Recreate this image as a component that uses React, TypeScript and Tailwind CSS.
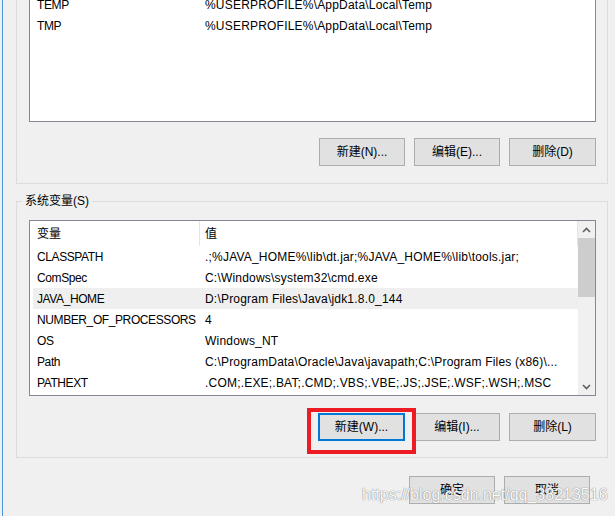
import React from 'react';

const userVars = [
  { name: 'TEMP', value: '%USERPROFILE%\\AppData\\Local\\Temp' },
  { name: 'TMP', value: '%USERPROFILE%\\AppData\\Local\\Temp' },
];

const systemVars = [
  { name: 'CLASSPATH', value: '.;%JAVA_HOME%\\lib\\dt.jar;%JAVA_HOME%\\lib\\tools.jar;' },
  { name: 'ComSpec', value: 'C:\\Windows\\system32\\cmd.exe' },
  { name: 'JAVA_HOME', value: 'D:\\Program Files\\Java\\jdk1.8.0_144', selected: true },
  { name: 'NUMBER_OF_PROCESSORS', value: '4' },
  { name: 'OS', value: 'Windows_NT' },
  { name: 'Path', value: 'C:\\ProgramData\\Oracle\\Java\\javapath;C:\\Program Files (x86)\\...' },
  { name: 'PATHEXT', value: '.COM;.EXE;.BAT;.CMD;.VBS;.VBE;.JS;.JSE;.WSF;.WSH;.MSC' },
];

// Classic Win10 push button
const WinButton: React.FC<{ label: string; focused?: boolean; className?: string }> = ({
  label,
  focused = false,
  className = '',
}) => (
  <div
    className={`flex h-[28px] w-[86px] items-center justify-center bg-[#e1e1e1] text-[12px] text-black ${
      focused ? 'border-2 border-[#0078d7]' : 'border border-[#adadad]'
    } ${className}`}
  >
    {label}
  </div>
);

const VarRow: React.FC<{ name: string; value: string; selected?: boolean }> = ({ name, value, selected }) => (
  <div className={`flex h-[21px] items-center whitespace-nowrap ${selected ? 'bg-[#efefef]' : ''}`}>
    <div className="w-[166px] shrink-0 pl-[4px] tracking-[-0.4px]">{name}</div>
    <div className="min-w-0 flex-1 overflow-hidden pl-[6px] tracking-[0.2px]">{value}</div>
  </div>
);

const Chevron: React.FC<{ down?: boolean }> = ({ down }) => (
  <svg width="9" height="6" viewBox="0 0 9 6" className={down ? 'rotate-180' : ''}>
    <path d="M1 5 L4.5 1.5 L8 5" fill="none" stroke="#606060" strokeWidth="1.6" />
  </svg>
);

export default function App() {
  return (
    <div className="relative flex h-[516px] w-[615px] overflow-hidden bg-[#f0f0f0] font-['Liberation_Sans','Noto_Sans_CJK_SC',sans-serif] text-[12px] text-black">
      {/* window edge */}
      <div className="w-[2px] shrink-0" />
      <div className="w-px shrink-0 bg-[#4a94d8]" />

      <div className="flex flex-1 flex-col pl-[13px] pr-[7px]">
        {/* User variables group (top cut off) */}
        <div className="flex h-[184px] flex-col border-x border-b border-[#dcdcdc]">
          <div className="ml-[12px] mr-[11px] h-[122px] overflow-hidden border-x border-b border-[#828790] bg-white">
            <div className="-mt-[6px] pl-[3px]">
              {userVars.map((v) => (
                <VarRow key={v.name} name={v.name} value={v.value} />
              ))}
            </div>
          </div>
          <div className="mr-[11px] mt-[16px] flex justify-end gap-[9px]">
            <WinButton label="新建(N)..." />
            <WinButton label="编辑(E)..." />
            <WinButton label="删除(D)" className="w-[87px]" />
          </div>
        </div>

        {/* System variables group */}
        <div className="mt-[17px] flex h-[257px] flex-col border border-[#dcdcdc]">
          <div className="-mt-[9px] ml-[5px] w-fit bg-[#f0f0f0] px-[3px] leading-[16px]">系统变量(S)</div>
          <div className="ml-[12px] mr-[11px] mt-[11px] flex h-[176px] border border-[#828790] bg-white">
            <div className="flex min-w-0 flex-1 flex-col">
              <div className="flex h-[25px] shrink-0 items-center">
                <div className="w-[169px] shrink-0 pl-[7px]">变量</div>
                <div className="h-full w-px bg-[#e5e5e5]" />
                <div className="flex-1 pl-[5px]">值</div>
                <div className="h-full w-px bg-[#e5e5e5]" />
              </div>
              <div className="pl-[3px]">
                {systemVars.map((v) => (
                  <VarRow key={v.name} name={v.name} value={v.value} selected={v.selected} />
                ))}
              </div>
            </div>
            {/* scrollbar */}
            <div className="flex w-[17px] shrink-0 flex-col bg-[#f0f0f0]">
              <div className="flex h-[17px] items-center justify-center">
                <Chevron />
              </div>
              <div className="h-[59px] bg-[#cdcdcd]" />
              <div className="flex-1" />
              <div className="flex h-[17px] items-center justify-center">
                <Chevron down />
              </div>
            </div>
          </div>
          <div className="mr-[11px] mt-[17px] flex justify-end gap-[9px]">
            <div className="relative">
              <WinButton label="新建(W)..." focused className="w-[87px]" />
              <div className="absolute -left-[11px] -top-[5px] h-[46px] w-[109px] border-4 border-[#ed1c24]" />
            </div>
            <WinButton label="编辑(I)..." />
            <WinButton label="删除(L)" className="w-[87px]" />
          </div>
        </div>

        {/* OK / Cancel */}
        <div className="mr-[18px] mt-[18px] flex justify-end gap-[9px]">
          <WinButton label="确定" />
          <WinButton label="取消" />
        </div>
      </div>

      {/* watermark */}
      <div className="absolute left-[362px] top-[483px] whitespace-nowrap font-['Liberation_Sans',sans-serif] text-[16px] text-[#fafafa] [text-shadow:0_0_1px_#8a8a8a,0_0_1px_#8a8a8a]">
        https://blog.csdn.net/qq_38213516
      </div>
    </div>
  );
}
